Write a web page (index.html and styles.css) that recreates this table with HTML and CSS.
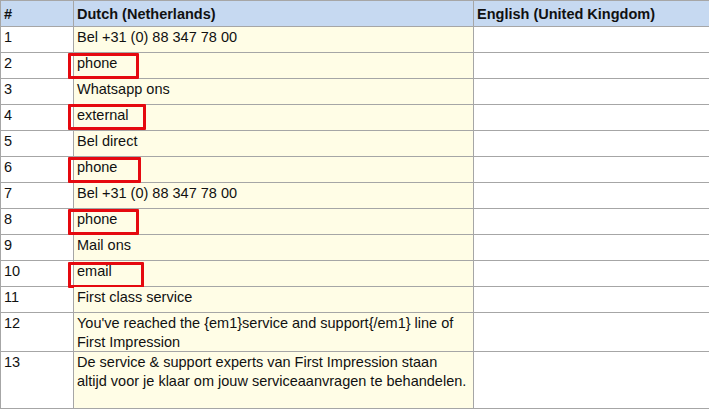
FILE: index.html
```html
<!DOCTYPE html>
<html>
<head>
<meta charset="utf-8">
<link rel="stylesheet" href="styles.css">
</head>
<body>
<table class="grid">
  <colgroup><col class="c-num"><col class="c-src"><col class="c-tgt"></colgroup>
  <thead>
    <tr class="head"><th>#</th><th>Dutch (Netherlands)</th><th>English (United Kingdom)</th></tr>
  </thead>
  <tbody>
    <tr><td>1</td><td class="src">Bel +31 (0) 88 347 78 00</td><td></td></tr>
    <tr><td>2</td><td class="src">phone<span class="mark w71"></span></td><td></td></tr>
    <tr><td>3</td><td class="src">Whatsapp ons</td><td></td></tr>
    <tr><td>4</td><td class="src">external<span class="mark w78 up"></span></td><td></td></tr>
    <tr><td>5</td><td class="src">Bel direct</td><td></td></tr>
    <tr><td>6</td><td class="src">phone<span class="mark w73"></span></td><td></td></tr>
    <tr><td>7</td><td class="src">Bel +31 (0) 88 347 78 00</td><td></td></tr>
    <tr><td>8</td><td class="src">phone<span class="mark w71"></span></td><td></td></tr>
    <tr><td>9</td><td class="src">Mail ons</td><td></td></tr>
    <tr><td>10</td><td class="src">email<span class="mark w76 down"></span></td><td></td></tr>
    <tr><td>11</td><td class="src">First class service</td><td></td></tr>
    <tr class="r2"><td>12</td><td class="src">You've reached the {em1}service and support{/em1} line of First Impression</td><td></td></tr>
    <tr class="r3"><td>13</td><td class="src">De service &amp; support experts van First Impression staan altijd voor je klaar om jouw serviceaanvragen te behandelen.</td><td></td></tr>
  </tbody>
</table>
</body>
</html>
```

FILE: styles.css
```css
html, body {
  margin: 0;
  padding: 0;
  background: #ffffff;
}

.grid {
  border-collapse: collapse;
  table-layout: fixed;
  width: 709px;
  font-family: "Liberation Sans", Arial, sans-serif;
  font-size: 14.5px;
  color: #111111;
}

.c-num { width: 73px; }
.c-src { width: 400px; }
.c-tgt { width: 236px; }

.grid th,
.grid td {
  border: 1px solid #a6a6a6;
  padding: 1px 3px 0 3px;
  line-height: 18.5px;
  vertical-align: top;
  text-align: left;
  position: relative;
}

.grid tr { height: 26px; }

.head th {
  background: #c6d9f1;
  font-weight: bold;
  vertical-align: middle;
  padding-top: 2px;
}

.src { background: #fffde6; }

.grid tr.r2 { height: 38px; }
.grid tr.r3 { height: 57px; }

.mark {
  position: absolute;
  left: -6px;
  top: 0;
  height: 20px;
  border: 3px solid #e5090f;
  border-radius: 1px;
  box-sizing: content-box;
}

.mark.up { top: -1px; }
.mark.down { top: 1px; }

.w71 { width: 65px; }
.w73 { width: 67px; }
.w76 { width: 70px; }
.w78 { width: 72px; }
```
